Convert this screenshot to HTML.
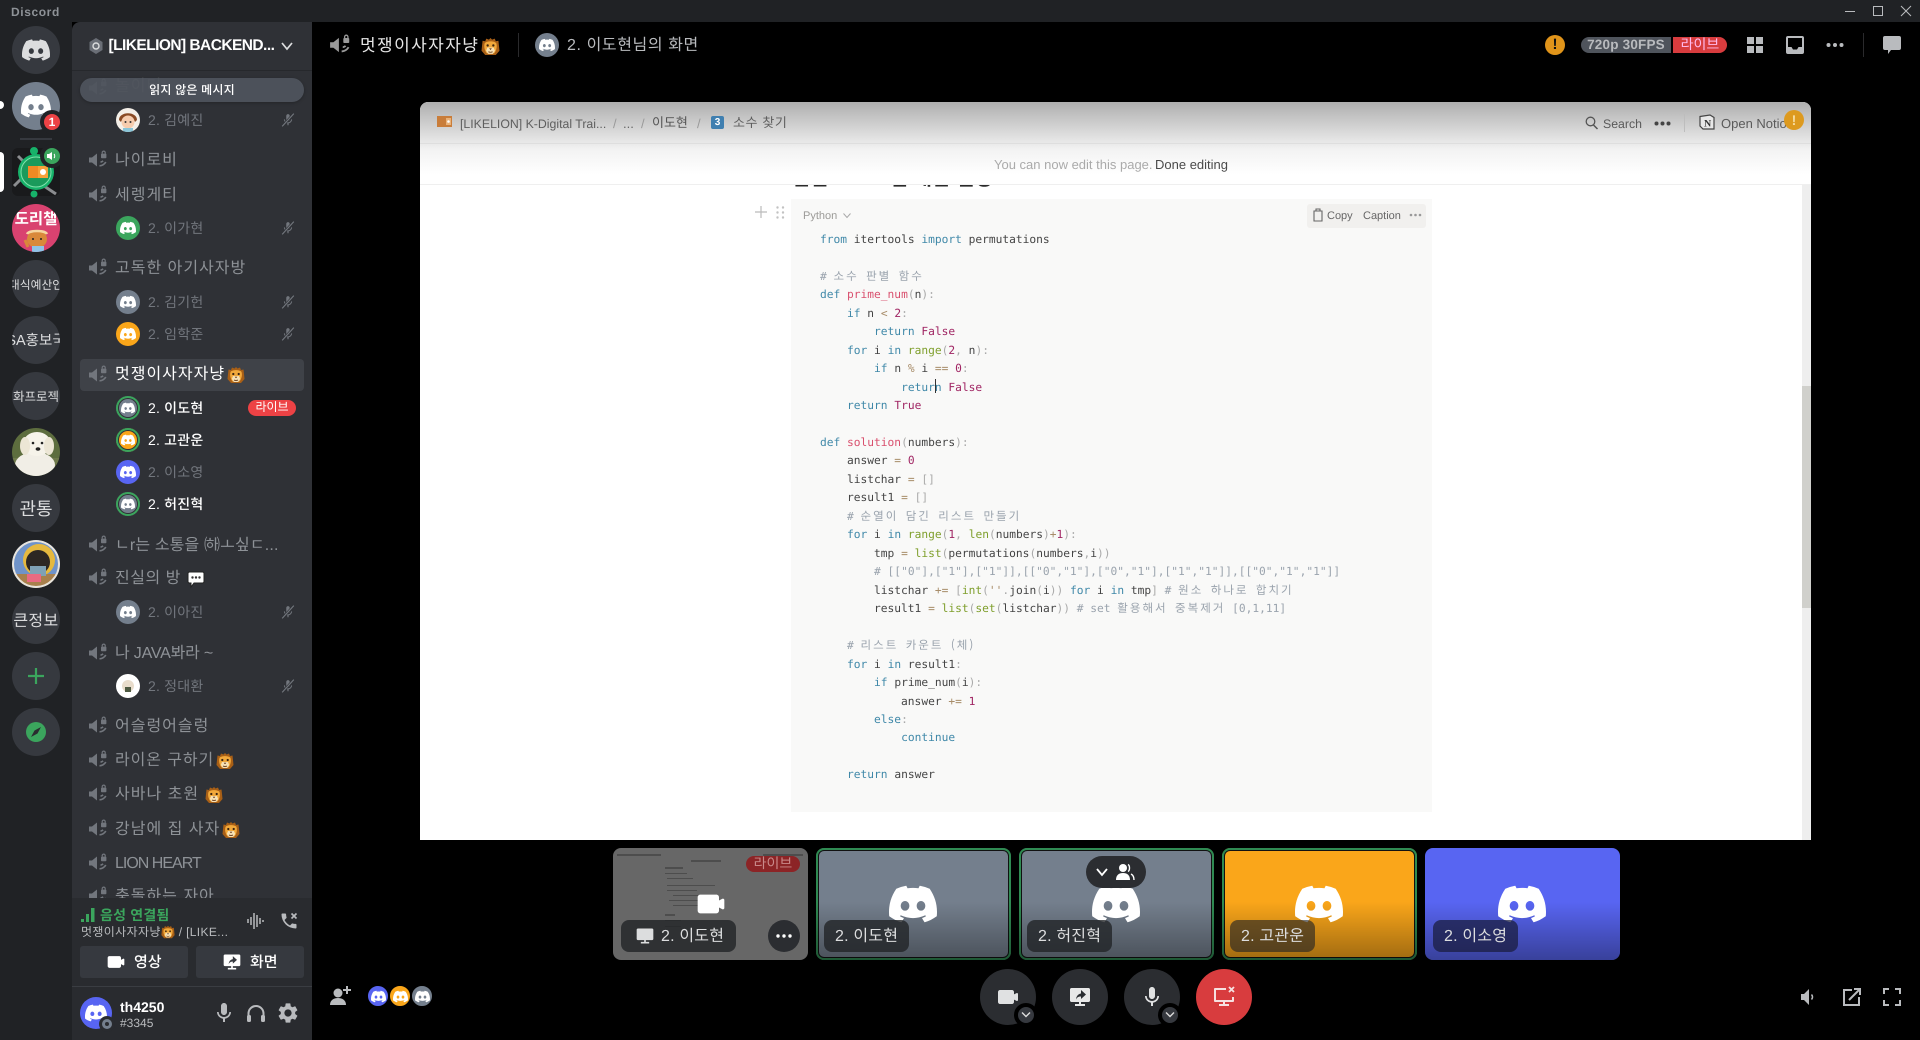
<!DOCTYPE html>
<html lang="ko"><head><meta charset="utf-8"><title>Discord</title>
<style>
*{box-sizing:border-box;margin:0;padding:0}
html,body{width:1920px;height:1040px;overflow:hidden;background:#000}
body{position:relative;font-family:"Liberation Sans","Noto Sans CJK KR",sans-serif;text-rendering:geometricPrecision}
.a{position:absolute;white-space:nowrap}
svg{display:block;overflow:visible}
.ch{position:absolute;left:115px;height:24px;margin-top:1px;line-height:24px;font-size:16px;letter-spacing:1px;color:#8e9297;white-space:nowrap;display:flex;align-items:center;gap:2px}
.vi{position:absolute;left:88px;width:20px;height:20px;color:#72767d}
.nm{position:absolute;left:148px;height:24px;line-height:24px;font-size:14px;letter-spacing:.2px;color:#72767d;white-space:nowrap}
.nm.on{color:#fff;font-weight:500}
.av{position:absolute;width:24px;height:24px;border-radius:50%;display:flex;align-items:center;justify-content:center;color:#fff}
.ring{box-shadow:inset 0 0 0 2px #3ba55d,inset 0 0 0 3px #2f3136}
.mt{position:absolute;left:281px;width:14px;height:16px;color:#72767d}
.sv{position:absolute;left:12px;width:48px;height:48px;border-radius:50%;background:#36393f;overflow:hidden;color:#dcddde;text-align:center;white-space:nowrap;display:flex;align-items:center;justify-content:center}
.tile{position:absolute;top:848px;height:112px;width:195px;border-radius:8px;overflow:hidden}
.tile .g{position:absolute;inset:0;background:linear-gradient(rgba(0,0,0,0) 48%,rgba(0,0,0,.36))}
.sp{box-shadow:inset 0 0 0 2px #2f8a52,inset 0 0 0 3px #111}
.lb{position:absolute;top:72px;height:32px;border-radius:8px;background:rgba(32,34,37,.78);color:#dcddde;font-size:16px;line-height:33px;padding:0 11px;white-space:nowrap;letter-spacing:.2px}
.rb{position:absolute;top:969px;width:56px;height:56px;border-radius:50%;background:#2b2d31;color:#e0e1e2;display:flex;align-items:center;justify-content:center}
.cv{position:absolute;top:1003px;width:24px;height:24px;border-radius:50%;background:#36393f;border:4px solid #000;color:#ddd;display:flex;align-items:center;justify-content:center}
pre.a{white-space:pre;font-family:"DejaVu Sans Mono","Liberation Mono","Noto Sans CJK KR",monospace;font-size:11.23px;line-height:18.47px;color:#444}
pre .k{color:#3f88a8}pre .f{color:#d9506e}pre .n{color:#a02563}pre .b{color:#7f9f2c}pre .p{color:#aaa}pre .o{color:#a88d6a}pre .c{color:#9aa3ad}
pre .h{font-family:"Noto Sans CJK KR",sans-serif;font-size:11.5px;letter-spacing:2px;word-spacing:2.2px;line-height:0}
</style></head><body>
<svg width="0" height="0" style="position:absolute"><defs>
<symbol id="dc" viewBox="0 0 24 24"><path fill="currentColor" d="M20.317 4.3698a19.7913 19.7913 0 00-4.8851-1.5152.0741.0741 0 00-.0785.0371c-.211.3753-.4447.8648-.6083 1.2495-1.8447-.2762-3.68-.2762-5.4868 0-.1636-.3933-.4058-.8742-.6177-1.2495a.077.077 0 00-.0785-.037 19.7363 19.7363 0 00-4.8852 1.515.0699.0699 0 00-.0321.0277C.5334 9.0458-.319 13.5799.0992 18.0578a.0824.0824 0 00.0312.0561c2.0528 1.5076 4.0413 2.4228 5.9929 3.0294a.0777.0777 0 00.0842-.0276c.4616-.6304.8731-1.2952 1.226-1.9942a.076.076 0 00-.0416-.1057c-.6528-.2476-1.2743-.5495-1.8722-.8923a.077.077 0 01-.0076-.1277c.1258-.0943.2517-.1923.3718-.2914a.0743.0743 0 01.0776-.0105c3.9278 1.7933 8.18 1.7933 12.0614 0a.0739.0739 0 01.0785.0095c.1202.099.246.1981.3728.2924a.077.077 0 01-.0066.1276 12.2986 12.2986 0 01-1.873.8914.0766.0766 0 00-.0407.1067c.3604.698.7719 1.3628 1.225 1.9932a.076.076 0 00.0842.0286c1.961-.6067 3.9495-1.5219 6.0023-3.0294a.077.077 0 00.0313-.0552c.5004-5.177-.8382-9.6739-3.5485-13.6604a.061.061 0 00-.0312-.0286zM8.02 15.3312c-1.1825 0-2.1569-1.0857-2.1569-2.419 0-1.3332.9555-2.4189 2.157-2.4189 1.2108 0 2.1757 1.0952 2.1568 2.419 0 1.3332-.9555 2.4189-2.1569 2.4189zm7.9748 0c-1.1825 0-2.1569-1.0857-2.1569-2.419 0-1.3332.9554-2.4189 2.1569-2.4189 1.2108 0 2.1757 1.0952 2.1568 2.419 0 1.3332-.946 2.4189-2.1568 2.4189Z"/></symbol>
<symbol id="vc" viewBox="0 0 20 20"><path fill="currentColor" d="M1 7.5h3L9 3.5v13l-5-4H1z"/><path fill="none" stroke="currentColor" stroke-width="1.7" d="M12.5 12c1 0 1.9-.5 2.6-1.2M11.5 15.8c2.8-.2 5-1.6 6.3-3.8"/><rect fill="currentColor" x="13" y="3.6" width="5.4" height="4.6" rx=".8"/><path fill="none" stroke="currentColor" stroke-width="1.2" d="M14.2 3.8V2.6a1.5 1.5 0 0 1 3 0v1.2"/></symbol>
<symbol id="mute" viewBox="0 0 24 24"><path fill="currentColor" d="M14.99 11c0 1.66-1.33 3-2.99 3-1.66 0-3-1.34-3-3V5c0-1.66 1.34-3 3-3s3 1.34 3 3l-.01 6zM12 16c2.76 0 5.3-2.1 5.3-5H19c0 3.42-2.72 6.23-6 6.72V21h-2v-3.28C7.72 17.23 5 14.42 5 11h1.7c0 2.9 2.54 5 5.3 5z"/><path stroke="#2f3136" stroke-width="4" d="M22 1 2 23"/><path stroke="currentColor" stroke-width="2" d="M22 1 2 23"/></symbol>
<symbol id="mic" viewBox="0 0 24 24"><path fill="currentColor" d="M14.99 11c0 1.66-1.33 3-2.99 3-1.66 0-3-1.34-3-3V5c0-1.66 1.34-3 3-3s3 1.34 3 3l-.01 6zM12 16c2.76 0 5.3-2.1 5.3-5H19c0 3.42-2.72 6.23-6 6.72V21h-2v-3.28C7.72 17.23 5 14.42 5 11h1.7c0 2.9 2.54 5 5.3 5z"/></symbol>
<symbol id="cam" viewBox="0 0 24 24"><path fill="currentColor" d="M21.526 8.149a1 1 0 0 0-.973-.044L18 9.382V7c0-1.103-.897-2-2-2H4C2.897 5 2 5.897 2 7v10c0 1.103.897 2 2 2h12c1.103 0 2-.897 2-2v-2.382l2.553 1.276a.992.992 0 0 0 .973-.043c.294-.183.474-.504.474-.851V9c0-.347-.18-.668-.474-.851z"/></symbol>
<symbol id="scr" viewBox="0 0 24 24"><path fill="currentColor" d="M2 4.5C2 3.67 2.67 3 3.5 3h17c.83 0 1.5.67 1.5 1.5v11c0 .83-.67 1.5-1.5 1.5H13v2h4v2H7v-2h4v-2H3.5C2.67 17 2 16.33 2 15.5z"/></symbol>
<symbol id="lion" viewBox="0 0 18 18"><path fill="#a85f16" d="M1 8 1.5 3.5 4 4 5 1.5 7.5 2.5 9 1l1.500 1.500L13 1.500 14 4l2.500-.5L17 8l.5 5-3.500 4H4L.5 13z"/><path fill="#f2a93b" d="M3.500 6C5 3.500 13 3.500 14.500 6c1 3 0 7-2 9.500h-7C3.500 13 2.500 9 3.500 6z"/><path fill="#f8e2b4" d="M6 10h6l1.200 3-2 3H6.800l-2-3z"/><circle cx="6.300" cy="8" r="1.100" fill="#3a2410"/><circle cx="11.700" cy="8" r="1.100" fill="#3a2410"/><path fill="#5a2d12" d="M7.700 10.800h2.600L9 12.300z"/><path fill="none" stroke="#5a2d12" stroke-width=".8" d="M7 14c1 .6 3 .6 4 0"/></symbol>
</defs></svg>

<!-- title bar -->
<div class="a" style="left:0;top:0;width:1920px;height:22px;background:#202225"></div>
<div class="a" style="left:11px;top:5px;font-size:12px;line-height:14px;font-weight:bold;color:#8e9297;letter-spacing:.6px">Discord</div>
<div class="a" style="left:1845px;top:11px;width:10px;height:1px;background:#b9bbbe"></div>
<div class="a" style="left:1873px;top:6px;width:10px;height:10px;border:1px solid #b9bbbe"></div>
<svg class="a" style="left:1901px;top:6px" width="10" height="10"><path d="M0 0 10 10M10 0 0 10" stroke="#b9bbbe"/></svg>

<!-- server rail -->
<div class="a" style="left:0;top:22px;width:72px;height:1018px;background:#202225"></div>
<div class="a" style="left:72px;top:22px;width:240px;height:1018px;background:#2f3136;border-top-left-radius:8px"></div>
<div class="sv" style="top:26px;color:#dcddde"><svg width="28" height="28"><use href="#dc"/></svg></div>
<div class="sv" style="top:82px;background:#747f8d;color:#fff"><svg width="30" height="30"><use href="#dc"/></svg></div>
<div class="a" style="left:0;top:101px;width:4px;height:8px;border-radius:0 4px 4px 0;background:#fff"></div>
<div class="a" style="left:40px;top:110px;width:24px;height:24px;border-radius:50%;background:#202225"></div>
<div class="a" style="left:44px;top:114px;width:16px;height:16px;border-radius:50%;background:#ed4245;color:#fff;font-size:12px;font-weight:bold;line-height:16px;text-align:center">1</div>
<div class="a" style="left:20px;top:138px;width:32px;height:2px;background:#36393f"></div>
<div class="a" style="left:0;top:152px;width:4px;height:40px;border-radius:0 4px 4px 0;background:#fff"></div>
<svg class="a" style="left:12px;top:148px" width="48" height="48" viewBox="0 0 48 48"><rect width="48" height="48" fill="#191a1c" rx="6"/><path d="M2 38 14 26M34 22l12-8M6 8l8 8M32 38l12 8" stroke="#8b8d90" stroke-width="3"/><circle cx="24" cy="24" r="18" fill="#17b26a"/><circle cx="24" cy="24" r="15" fill="#1a9a5b" stroke="#7fe3ac"/><rect x="16" y="18" width="10" height="12" fill="#f08a24"/><rect x="26" y="18" width="10" height="12" fill="#f6a13a"/><circle cx="31" cy="24" r="3" fill="#fff"/><circle cx="22" cy="3" r="4" fill="#17b26a"/><circle cx="22" cy="46" r="3.500" fill="#17b26a"/></svg>
<div class="a" style="left:40px;top:144px;width:24px;height:24px;border-radius:50%;background:#202225"></div>
<div class="a" style="left:44px;top:148px;width:16px;height:16px;border-radius:50%;background:#3ba55d"></div>
<svg class="a" style="left:47px;top:151px" width="10" height="10" viewBox="0 0 10 10"><path fill="#fff" d="M0 3h2l3-2v8L2 7H0z"/><path fill="none" stroke="#fff" d="M7 3c1 1 1 3 0 4"/></svg>
<div class="sv" style="top:204px;background:#d94270;align-items:flex-start"><svg width="48" height="48" viewBox="0 0 48 48"><ellipse cx="25" cy="35" rx="10" ry="9" fill="#d9893a"/><path d="M15 30c2-4 18-4 20 0" stroke="#f5d6a0" stroke-width="2.500" fill="none"/><circle cx="21" cy="35" r="1" fill="#222"/><circle cx="29" cy="35" r="1" fill="#222"/><rect x="20" y="42" width="12" height="6" fill="#8fc4e8"/><path d="M13 36l3 7" stroke="#d9893a" stroke-width="3"/></svg><div class="a" style="left:0;width:48px;top:7px;line-height:17px;font-size:15.500px;font-weight:bold;color:#fff">도리챌</div></div>
<div class="sv" style="top:260px;font-size:11.800px;line-height:48px;padding-top:1px">대식예산인</div>
<div class="sv" style="top:316px;font-size:14.500px;line-height:48px;padding-top:1px">SA홍보국</div>
<div class="sv" style="top:372px;font-size:12.500px;line-height:48px;padding-top:1px">화프로젝</div>
<svg class="a" style="left:12px;top:428px" width="48" height="48" viewBox="0 0 48 48"><clipPath id="c1"><circle cx="24" cy="24" r="24"/></clipPath><g clip-path="url(#c1)"><rect width="48" height="48" fill="#5d6d3e"/><rect y="30" width="48" height="18" fill="#6f7a4c"/><ellipse cx="23" cy="37" rx="20" ry="13" fill="#f1eee6"/><ellipse cx="25" cy="16" rx="14" ry="12" fill="#f6f3ea"/><ellipse cx="13" cy="18" rx="5" ry="9" fill="#ece6d5"/><ellipse cx="37" cy="18" rx="5" ry="9" fill="#ece6d5"/><circle cx="21" cy="15" r="1.300" fill="#222"/><circle cx="30" cy="15" r="1.300" fill="#222"/><ellipse cx="26" cy="21" rx="2.400" ry="1.800" fill="#222"/></g></svg>
<div class="sv" style="top:484px;font-size:18px;line-height:48px;padding-top:1px">관통</div>
<svg class="a" style="left:12px;top:540px" width="48" height="48" viewBox="0 0 48 48"><clipPath id="c2"><circle cx="24" cy="24" r="24"/></clipPath><g clip-path="url(#c2)"><rect width="48" height="48" fill="#6f93c9"/><rect y="34" width="48" height="14" fill="#a8804c"/><ellipse cx="27" cy="20" rx="16" ry="16" fill="#e5b93f"/><ellipse cx="26" cy="22" rx="12" ry="12" fill="#2c2723"/><rect x="18" y="26" width="16" height="10" fill="#7fa1b5"/><rect x="15" y="34" width="14" height="8" fill="#e86a82"/><circle cx="24" cy="24" r="23" fill="none" stroke="#e8e4dc" stroke-width="2"/></g></svg>
<div class="sv" style="top:596px;font-size:16px;line-height:48px;padding-top:3px;letter-spacing:.4px">큰정보</div>
<div class="sv" style="top:652px;color:#3ba55d"><svg width="24" height="24"><path d="M12 4v16M4 12h16" stroke="#3ba55d" stroke-width="2.200"/></svg></div>
<div class="sv" style="top:708px"><svg width="20" height="20" viewBox="0 0 20 20"><circle cx="10" cy="10" r="10" fill="#3ba55d"/><path fill="#2a2c30" d="M15 5 11.500 11.500 5 15 8.500 8.500z"/></svg></div>

<!-- sidebar header -->
<svg class="a" style="left:88px;top:38px" width="16" height="16" viewBox="0 0 16 16"><path fill="#6a6e76" d="M8 0 14.500 4v8L8 16 1.500 12V4z"/><circle cx="8" cy="8" r="3" fill="none" stroke="#dcddde" stroke-width="1.400"/></svg>
<div class="a" style="left:108.500px;top:34px;line-height:24px;font-size:15.500px;font-weight:bold;color:#fff;letter-spacing:-.55px">[LIKELION] BACKEND...</div>
<svg class="a" style="left:281px;top:40px" width="12" height="12" viewBox="0 0 12 12"><path d="M1 3 6 9l5-6" fill="none" stroke="#dcddde" stroke-width="1.700"/></svg>
<div class="a" style="left:72px;top:70px;width:240px;height:1px;background:#26282c"></div>

<!-- channels -->
<svg class="vi" style="top:78px"><use href="#vc"/></svg><div class="ch" style="top:74px;opacity:.55">놀이터</div>
<div class="a" style="left:80px;top:78px;width:224px;height:24px;border-radius:12px;background:rgba(79,84,92,.93);box-shadow:0 1px 3px rgba(0,0,0,.25);color:#fff;font-size:12px;line-height:24px;text-align:center;font-weight:500;letter-spacing:.2px">읽지 않은 메시지</div>

<svg class="a" style="left:116px;top:108px" width="24" height="24" viewBox="0 0 24 24"><clipPath id="c3"><circle cx="12" cy="12" r="12"/></clipPath><g clip-path="url(#c3)"><rect width="24" height="24" fill="#f4efe8"/><path fill="#8a4a24" d="M3 12C3 3 21 3 21 12l-2 2c-1-5-13-5-14 0z"/><circle cx="12" cy="14" r="6.500" fill="#f6ccae"/><circle cx="9.500" cy="14" r="1" fill="#333"/><circle cx="14.500" cy="14" r="1" fill="#333"/><rect x="7" y="20" width="10" height="4" fill="#8ac5d8"/></g></svg>
<div class="nm" style="top:108px">2. 김예진</div>
<svg class="mt" style="top:112px"><use href="#mute"/></svg>

<svg class="vi" style="top:150px"><use href="#vc"/></svg><div class="ch" style="top:148px">나이로비</div>
<svg class="vi" style="top:185px"><use href="#vc"/></svg><div class="ch" style="top:183px">세렝게티</div>
<div class="av" style="left:116px;top:216px;background:#3ba55d"><svg width="16" height="16"><use href="#dc"/></svg></div>
<div class="nm" style="top:216px">2. 이가현</div><svg class="mt" style="top:220px"><use href="#mute"/></svg>
<svg class="vi" style="top:258px"><use href="#vc"/></svg><div class="ch" style="top:256px">고독한 아기사자방</div>
<div class="av" style="left:116px;top:290px;background:#747f8d"><svg width="16" height="16"><use href="#dc"/></svg></div>
<div class="nm" style="top:290px">2. 김기헌</div><svg class="mt" style="top:294px"><use href="#mute"/></svg>
<div class="av" style="left:116px;top:322px;background:#faa61a"><svg width="16" height="16"><use href="#dc"/></svg></div>
<div class="nm" style="top:322px">2. 임학준</div><svg class="mt" style="top:326px"><use href="#mute"/></svg>

<div class="a" style="left:80px;top:359px;width:224px;height:32px;border-radius:4px;background:#3f4248"></div>
<svg class="vi" style="top:365px"><use href="#vc"/></svg><div class="ch" style="top:362px;color:#fff">멋쟁이사자자냥<svg width="18" height="18"><use href="#lion"/></svg></div>
<div class="av ring" style="left:116px;top:396px;background:#747f8d"><svg width="14" height="14"><use href="#dc"/></svg></div>
<div class="nm on" style="top:396px">2. 이도현</div>
<div class="a" style="left:248px;top:400px;width:48px;height:16px;border-radius:8px;background:#ed4245;color:#fff;font-size:12px;line-height:15px;text-align:center">라이브</div>
<div class="av ring" style="left:116px;top:428px;background:#faa61a"><svg width="14" height="14"><use href="#dc"/></svg></div>
<div class="nm on" style="top:428px">2. 고관운</div>
<div class="av" style="left:116px;top:460px;background:#5865f2"><svg width="16" height="16"><use href="#dc"/></svg></div>
<div class="nm" style="top:460px">2. 이소영</div>
<div class="av ring" style="left:116px;top:492px;background:#747f8d"><svg width="14" height="14"><use href="#dc"/></svg></div>
<div class="nm on" style="top:492px">2. 허진혁</div>

<svg class="vi" style="top:535px"><use href="#vc"/></svg><div class="ch" style="top:533px;letter-spacing:.15px">ㄴr는 소통을 ㈛ㅗ싶ㄷ...</div>
<svg class="vi" style="top:568px"><use href="#vc"/></svg><div class="ch" style="top:566px;letter-spacing:.5px">진실의 방 <svg style="margin-left:4px" width="18" height="17" viewBox="0 0 18 17"><path fill="#fff" stroke="#222" d="M2.500 1h13A1.500 1.500 0 0 1 17 2.500v8a1.500 1.500 0 0 1-1.500 1.500H7l-3 4v-4H2.500A1.500 1.500 0 0 1 1 10.500v-8A1.500 1.500 0 0 1 2.500 1z"/><circle cx="5.500" cy="6.500" r="1.200" fill="#333"/><circle cx="9" cy="6.500" r="1.200" fill="#333"/><circle cx="12.500" cy="6.500" r="1.200" fill="#333"/></svg></div>
<div class="av" style="left:116px;top:600px;background:#747f8d"><svg width="16" height="16"><use href="#dc"/></svg></div>
<div class="nm" style="top:600px">2. 이아진</div><svg class="mt" style="top:604px"><use href="#mute"/></svg>
<svg class="vi" style="top:643px"><use href="#vc"/></svg><div class="ch" style="top:641px;letter-spacing:-.2px">나 JAVA봐라 ~</div>
<svg class="a" style="left:116px;top:674px" width="24" height="24" viewBox="0 0 24 24"><circle cx="12" cy="12" r="12" fill="#fff"/><circle cx="12" cy="12" r="6" fill="#e8dccb"/><rect x="9" y="13" width="6" height="5" fill="#4e5a42"/></svg>
<div class="nm" style="top:674px">2. 정대환</div><svg class="mt" style="top:678px"><use href="#mute"/></svg>

<svg class="vi" style="top:716px"><use href="#vc"/></svg><div class="ch" style="top:714px">어슬렁어슬렁</div>
<svg class="vi" style="top:750px"><use href="#vc"/></svg><div class="ch" style="top:748px;letter-spacing:.9px">라이온 구하기<svg width="18" height="18"><use href="#lion"/></svg></div>
<svg class="vi" style="top:784px"><use href="#vc"/></svg><div class="ch" style="top:782px">사바나 초원 <svg style="margin-left:4px" width="18" height="18"><use href="#lion"/></svg></div>
<svg class="vi" style="top:819px"><use href="#vc"/></svg><div class="ch" style="top:817px">강남에 집 사자<svg width="18" height="18"><use href="#lion"/></svg></div>
<svg class="vi" style="top:853px"><use href="#vc"/></svg><div class="ch" style="top:851px;letter-spacing:-1px">LION HEART</div>
<svg class="vi" style="top:886px"><use href="#vc"/></svg><div class="ch" style="top:884px">충돌하는 자아</div>

<!-- voice panel -->
<div class="a" style="left:72px;top:898px;width:240px;height:142px;background:#292b2f"></div>
<div class="a" style="left:72px;top:986px;width:240px;height:1px;background:#3a3d42"></div>
<svg class="a" style="left:81px;top:908px" width="14" height="14" viewBox="0 0 14 14"><path fill="#3ba55d" d="M0 11h3v3H0zM5 6h3v8H5zM10 0h3.500v14H10z"/></svg>
<div class="a" style="left:100px;top:905px;font-size:14px;line-height:20px;font-weight:bold;color:#3ba55d;letter-spacing:.2px">음성 연결됨</div>
<div class="a" style="left:81px;top:923px;font-size:12px;line-height:18px;color:#b9bbbe;letter-spacing:.35px;display:flex;align-items:center">멋쟁이사자자냥<svg width="14" height="14"><use href="#lion"/></svg><span style="margin-left:4px">/ [LIKE...</span></div>
<svg class="a" style="left:247px;top:912px" width="18" height="18" viewBox="0 0 18 18"><path d="M1 7v4M4 5v8M7 1v16M10 3v12M13 6v6M16 8v2" stroke="#b9bbbe" stroke-width="1.500"/></svg>
<svg class="a" style="left:279px;top:911px" width="20" height="20" viewBox="0 0 24 24"><path fill="#b9bbbe" d="M20 15.500c-1.250 0-2.450-.2-3.570-.57a1 1 0 0 0-1.020.24l-2.200 2.200a15 15 0 0 1-6.590-6.590l2.200-2.200a1 1 0 0 0 .25-1A11.400 11.400 0 0 1 8.500 4a1 1 0 0 0-1-1H4a1 1 0 0 0-1 1 17 17 0 0 0 17 17 1 1 0 0 0 1-1v-3.500a1 1 0 0 0-1-1z"/><path d="M15 3l6 6M21 3l-6 6" stroke="#b9bbbe" stroke-width="2"/></svg>
<div class="a" style="left:80px;top:946px;width:108px;height:32px;background:#36393f;border-radius:3px"></div>
<div class="a" style="left:196px;top:946px;width:108px;height:32px;background:#36393f;border-radius:3px"></div>
<svg class="a" style="left:106px;top:952px;color:#fff" width="20" height="20"><use href="#cam"/></svg>
<div class="a" style="left:134px;top:951px;font-size:15px;line-height:24px;color:#fff;font-weight:500">영상</div>
<svg class="a" style="left:222px;top:952px;color:#fff" width="20" height="20"><use href="#scr"/></svg>
<svg class="a" style="left:222px;top:952px" width="20" height="20" viewBox="0 0 24 24"><path fill="#36393f" d="M13 5l5 4.500-5 4.500v-2.500c-2.500 0-4 .8-5 3 .3-3.200 2-5.500 5-6z"/></svg>
<div class="a" style="left:250px;top:951px;font-size:15px;line-height:24px;color:#fff;font-weight:500">화면</div>
<div class="av" style="left:80px;top:997px;width:32px;height:32px;background:#5865f2"><svg width="22" height="22"><use href="#dc"/></svg></div>
<div class="a" style="left:99px;top:1016px;width:16px;height:16px;border-radius:50%;background:#292b2f"></div>
<div class="a" style="left:102px;top:1019px;width:10px;height:10px;border-radius:50%;background:#747f8d"></div>
<div class="a" style="left:105px;top:1022px;width:4px;height:4px;border-radius:50%;background:#292b2f"></div>
<div class="a" style="left:120px;top:997px;font-size:14px;line-height:20px;font-weight:bold;color:#fff">th4250</div>
<div class="a" style="left:120px;top:1015px;font-size:12px;line-height:16px;color:#b9bbbe">#3345</div>
<svg class="a" style="left:212px;top:1001px;color:#b9bbbe" width="24" height="24"><use href="#mic"/></svg>
<svg class="a" style="left:244px;top:1001px" width="24" height="24" viewBox="0 0 24 24"><path d="M4.500 18v-5.500a7.500 7.500 0 0 1 15 0V18" fill="none" stroke="#b9bbbe" stroke-width="2"/><rect x="3" y="14" width="4" height="7" rx="1.500" fill="#b9bbbe"/><rect x="17" y="14" width="4" height="7" rx="1.500" fill="#b9bbbe"/></svg>
<svg class="a" style="left:276px;top:1001px" width="24" height="24" viewBox="0 0 24 24"><path fill="#b9bbbe" d="M19.140 12.940c.04-.3.06-.61.06-.94 0-.32-.02-.64-.07-.94l2.030-1.580c.18-.14.23-.41.12-.61l-1.920-3.320c-.12-.22-.37-.29-.59-.22l-2.390.96c-.5-.38-1.030-.7-1.620-.94l-.36-2.540c-.04-.24-.24-.41-.48-.41h-3.840c-.24 0-.43.17-.47.41l-.36 2.540c-.59.24-1.130.57-1.620.94l-2.390-.96c-.22-.08-.47 0-.59.22L2.740 8.870c-.12.21-.08.47.12.61l2.030 1.580c-.05.3-.09.63-.09.94s.02.64.07.94l-2.030 1.580c-.18.14-.23.41-.12.61l1.920 3.320c.12.22.37.29.59.22l2.390-.96c.5.38 1.030.7 1.620.94l.36 2.540c.05.24.24.41.48.41h3.840c.24 0 .44-.17.47-.41l.36-2.540c.59-.24 1.130-.56 1.620-.94l2.390.96c.22.08.47 0 .59-.22l1.920-3.320c.12-.22.07-.47-.12-.61l-2.010-1.580zM12 15.600c-1.980 0-3.600-1.620-3.600-3.600s1.620-3.600 3.600-3.600 3.600 1.620 3.600 3.600-1.620 3.600-3.600 3.600z"/></svg>

<!-- main header -->
<svg class="a" style="left:329px;top:34px;color:#999" width="22" height="22"><use href="#vc"/></svg>
<div class="a" style="left:360px;top:34px;height:24px;line-height:24px;font-size:17px;letter-spacing:1.4px;color:#e6e6e6;display:flex;align-items:center;gap:2px">멋쟁이사자자냥<svg width="19" height="19"><use href="#lion"/></svg></div>
<div class="a" style="left:518px;top:33px;width:1px;height:24px;background:#2a2a2c"></div>
<div class="av" style="left:535px;top:33px;background:#747f8d"><svg width="16" height="16"><use href="#dc"/></svg></div>
<div class="a" style="left:567px;top:34px;line-height:24px;font-size:16px;letter-spacing:.6px;color:#b9bbbe">2. 이도현님의 화면</div>
<div class="a" style="left:1545px;top:35px;width:20px;height:20px;border-radius:50%;background:#e0941a;color:#111;font-size:15px;font-weight:bold;line-height:20px;text-align:center">!</div>
<div class="a" style="left:1581px;top:37px;width:90px;height:16px;background:#4f545c;border-radius:8px 0 0 8px;color:#b9bbbe;font-size:13.500px;font-weight:bold;line-height:16px;text-align:center;letter-spacing:.2px">720p 30FPS</div>
<div class="a" style="left:1673px;top:37px;width:54px;height:16px;background:#d83c3e;border-radius:0 8px 8px 0;color:#fbe;font-size:14px;line-height:15px;text-align:center">라이브</div>
<svg class="a" style="left:1747px;top:37px" width="16" height="16"><path fill="#b9bbbe" d="M0 0h7v7H0zM9 0h7v7H9zM0 9h7v7H0zM9 9h7v7H9z"/></svg>
<svg class="a" style="left:1786px;top:36px" width="18" height="18" viewBox="0 0 18 18"><path fill="#b9bbbe" d="M2 0h14a2 2 0 0 1 2 2v14a2 2 0 0 1-2 2H2a2 2 0 0 1-2-2V2a2 2 0 0 1 2-2zm0 2v9h3.500l1.500 2.500h4L12.500 11H16V2z"/></svg>
<svg class="a" style="left:1826px;top:42px" width="18" height="6"><circle cx="2.500" cy="3" r="2" fill="#b9bbbe"/><circle cx="9" cy="3" r="2" fill="#b9bbbe"/><circle cx="15.500" cy="3" r="2" fill="#b9bbbe"/></svg>
<div class="a" style="left:1863px;top:33px;width:1px;height:24px;background:#2a2a2c"></div>
<svg class="a" style="left:1883px;top:36px" width="18" height="18" viewBox="0 0 18 18"><path fill="#b9bbbe" d="M2 0h14a2 2 0 0 1 2 2v10a2 2 0 0 1-2 2H8l-3 4v-4H2a2 2 0 0 1-2-2V2a2 2 0 0 1 2-2z"/></svg>

<!-- shared screen -->
<div class="a" style="left:420px;top:102px;width:1391px;height:738px;background:#fff;border-radius:8px 8px 0 0;overflow:hidden;filter:blur(.25px)">
  <div class="a" style="left:372px;top:62px;font-size:20px;line-height:30px;font-weight:bold;color:#2a2a2a">간단 프로그램 대한 설명</div>
  <div class="a" style="left:0;top:0;width:1391px;height:82px;background:linear-gradient(#afafaf 0,#d4d4d4 26px,#f3f3f3 48px,#fff 72px);"></div>
  <div class="a" style="left:0;top:41px;width:1391px;height:1px;background:rgba(0,0,0,.05)"></div>
  <div class="a" style="left:0;top:82px;width:1391px;height:1px;background:#efefef"></div>
  <svg class="a" style="left:17px;top:13px" width="15" height="14" viewBox="0 0 15 14"><rect y="1" width="15" height="11" fill="#c97d3a"/><rect x="9" y="3" width="5" height="7" fill="#eab278"/><circle cx="11.500" cy="6.500" r="1.300" fill="#fff"/></svg>
  <div class="a" style="left:40px;top:13px;font-size:12.300px;line-height:18px;color:#5e5e5e">[LIKELION] K-Digital Trai...</div>
  <div class="a" style="left:193px;top:13px;font-size:13px;line-height:18px;color:#999">/</div>
  <div class="a" style="left:203px;top:13px;font-size:13px;line-height:18px;color:#666">...</div>
  <div class="a" style="left:221px;top:13px;font-size:13px;line-height:18px;color:#999">/</div>
  <div class="a" style="left:232px;top:12px;font-size:13px;line-height:18px;color:#555">이도현</div>
  <div class="a" style="left:277px;top:13px;font-size:13px;line-height:18px;color:#999">/</div>
  <div class="a" style="left:291px;top:14px;width:13px;height:13px;background:#3f7fb0;border-radius:2px;color:#fff;font-size:10px;font-weight:bold;line-height:13px;text-align:center">3</div>
  <div class="a" style="left:313px;top:12px;font-size:13px;line-height:18px;letter-spacing:.6px;color:#5e5e5e">소수 찾기</div>
  <svg class="a" style="left:1165px;top:14px" width="13" height="14" viewBox="0 0 13 14"><circle cx="5.500" cy="5.500" r="4.300" fill="none" stroke="#555" stroke-width="1.300"/><path d="M8.500 9l4 4" stroke="#555" stroke-width="1.500"/></svg>
  <div class="a" style="left:1183px;top:13px;font-size:12.300px;line-height:18px;color:#5a5a5a">Search</div>
  <svg class="a" style="left:1234px;top:19px" width="17" height="5"><circle cx="2.500" cy="2.500" r="2" fill="#444"/><circle cx="8.500" cy="2.500" r="2" fill="#444"/><circle cx="14.500" cy="2.500" r="2" fill="#444"/></svg>
  <div class="a" style="left:1264px;top:12px;width:1px;height:18px;background:#bdbdbd"></div>
  <svg class="a" style="left:1279px;top:12px" width="16" height="16" viewBox="0 0 16 16"><path fill="#e8e8e8" stroke="#444" stroke-width="1.200" d="M1 2.500 11 1l4 2.500V15H4L1 12z"/><text x="5" y="12.500" font-family="Liberation Serif,serif" font-weight="bold" font-size="10" fill="#333">N</text></svg>
  <div class="a" style="left:1301px;top:13px;font-size:13px;line-height:18px;color:#5a5a5a">Open Notion</div>
  <div class="a" style="left:1364px;top:8px;width:20px;height:20px;border-radius:50%;background:#dd9a1f;color:#f6dca0;font-size:14px;font-weight:bold;line-height:20px;text-align:center">!</div>
  <div class="a" style="left:574px;top:54px;font-size:13px;line-height:18px;color:#aaa">You can now edit this page.</div>
  <div class="a" style="left:735px;top:54px;font-size:13px;line-height:18px;color:#4a4a4a">Done editing</div>

  <div class="a" style="left:1382px;top:83px;width:9px;height:655px;background:#eee"></div>
  <div class="a" style="left:1382px;top:284px;width:9px;height:222px;background:#d0d0cc"></div>

  <svg class="a" style="left:335px;top:104px" width="12" height="12"><path d="M6 0v12M0 6h12" stroke="#bbb" stroke-width="1.200"/></svg>
  <svg class="a" style="left:356px;top:104px" width="9" height="13"><g fill="#c2c2c2"><circle cx="1.500" cy="1.500" r="1.200"/><circle cx="7" cy="1.500" r="1.200"/><circle cx="1.500" cy="6.500" r="1.200"/><circle cx="7" cy="6.500" r="1.200"/><circle cx="1.500" cy="11.500" r="1.200"/><circle cx="7" cy="11.500" r="1.200"/></g></svg>

  <div class="a" style="left:371px;top:97px;width:641px;height:613px;background:#f9f9f8"></div>
  <div class="a" style="left:383px;top:105px;font-size:11px;line-height:18px;color:#9b9a97">Python</div>
  <svg class="a" style="left:423px;top:111px" width="8" height="6"><path d="M.5.500 4 4.500 7.500.500" fill="none" stroke="#aaa"/></svg>
  <div class="a" style="left:887px;top:102px;width:119px;height:24px;background:#f1f0ee;border-radius:3px"></div>
  <svg class="a" style="left:893px;top:106px" width="10" height="14" viewBox="0 0 10 14"><path fill="none" stroke="#666" stroke-width="1.100" d="M1 3h8v10H1zM3 3V1h4v2"/></svg>
  <div class="a" style="left:907px;top:105px;font-size:11px;line-height:18px;color:#666">Copy</div>
  <div class="a" style="left:943px;top:105px;font-size:11px;line-height:18px;color:#666">Caption</div>
  <svg class="a" style="left:989px;top:111px" width="13" height="4"><circle cx="2" cy="2" r="1.300" fill="#999"/><circle cx="6.500" cy="2" r="1.300" fill="#999"/><circle cx="11" cy="2" r="1.300" fill="#999"/></svg>

  <pre class="a" style="left:400px;top:128.800px"><span class="k">from</span> itertools <span class="k">import</span> permutations

<span class="c"># <span class="h">소수 판별 함수</span></span>
<span class="k">def</span> <span class="f">prime_num</span><span class="p">(</span>n<span class="p">):</span>
    <span class="k">if</span> n <span class="o">&lt;</span> <span class="n">2</span><span class="p">:</span>
        <span class="k">return</span> <span class="n">False</span>
    <span class="k">for</span> i <span class="k">in</span> <span class="b">range</span><span class="p">(</span><span class="n">2</span><span class="p">,</span> n<span class="p">):</span>
        <span class="k">if</span> n <span class="o">%</span> i <span class="o">==</span> <span class="n">0</span><span class="p">:</span>
            <span class="k">return</span> <span class="n">False</span>
    <span class="k">return</span> <span class="n">True</span>

<span class="k">def</span> <span class="f">solution</span><span class="p">(</span>numbers<span class="p">):</span>
    answer <span class="o">=</span> <span class="n">0</span>
    listchar <span class="o">=</span> <span class="p">[]</span>
    result1 <span class="o">=</span> <span class="p">[]</span>
    <span class="c"># <span class="h">순열이 담긴 리스트 만들기</span></span>
    <span class="k">for</span> i <span class="k">in</span> <span class="b">range</span><span class="p">(</span><span class="n">1</span><span class="p">,</span> <span class="b">len</span><span class="p">(</span>numbers<span class="p">)</span><span class="o">+</span><span class="n">1</span><span class="p">):</span>
        tmp <span class="o">=</span> <span class="b">list</span><span class="p">(</span>permutations<span class="p">(</span>numbers<span class="p">,</span>i<span class="p">))</span>
        <span class="c"># [["0"],["1"],["1"]],[["0","1"],["0","1"],["1","1"]],[["0","1","1"]]</span>
        listchar <span class="o">+=</span> <span class="p">[</span><span class="b">int</span><span class="p">(</span><span class="o">''</span><span class="p">.</span>join<span class="p">(</span>i<span class="p">))</span> <span class="k">for</span> i <span class="k">in</span> tmp<span class="p">]</span> <span class="c"># <span class="h">원소 하나로 합치기</span></span>
        result1 <span class="o">=</span> <span class="b">list</span><span class="p">(</span><span class="b">set</span><span class="p">(</span>listchar<span class="p">))</span> <span class="c"># set <span class="h">활용해서 중복제거</span> [0,1,11]</span>

    <span class="c"># <span class="h">리스트 카운트 (체)</span></span>
    <span class="k">for</span> i <span class="k">in</span> result1<span class="p">:</span>
        <span class="k">if</span> prime_num<span class="p">(</span>i<span class="p">):</span>
            answer <span class="o">+=</span> <span class="n">1</span>
        <span class="k">else</span><span class="p">:</span>
            <span class="k">continue</span>

    <span class="k">return</span> answer</pre>
  <div class="a" style="left:514.500px;top:277px;width:1px;height:14px;background:#333"></div>
</div>

<!-- tiles -->
<div class="tile" style="left:613px;background:#676767">
  <svg class="a" style="left:0;top:0" width="195" height="112"><g fill="#4d4d4d"><rect x="4" y="6" width="44" height="2"/><rect x="150" y="6" width="40" height="2"/><rect x="78" y="12" width="30" height="2" /><rect x="52" y="19" width="18" height="2"/><rect x="52" y="25" width="22" height="1"/><rect x="54" y="30" width="26" height="1"/><rect x="54" y="37" width="48" height="1"/><rect x="54" y="42" width="30" height="1"/><rect x="60" y="47" width="38" height="1"/><rect x="56" y="52" width="30" height="1"/><rect x="60" y="57" width="34" height="1"/><rect x="52" y="66" width="10" height="2"/><rect x="52" y="72" width="16" height="1"/><rect x="52" y="78" width="16" height="1"/></g></svg>
  <div class="a" style="left:133px;top:8px;width:54px;height:16px;border-radius:8px;background:#8c2426;color:#c98a8a;font-size:14px;line-height:15px;text-align:center">라이브</div>
  <svg class="a" style="left:82px;top:40px;color:#fff" width="32" height="32"><use href="#cam"/></svg>
  <div class="lb" style="left:8px;width:115px;padding-left:14px;display:flex;align-items:center;gap:6px"><svg width="20" height="20" style="color:#dcddde"><use href="#scr"/></svg><span>2. 이도현</span></div>
  <div class="a" style="left:155px;top:72px;width:32px;height:32px;border-radius:50%;background:#2b2d31"></div>
  <svg class="a" style="left:162px;top:86px" width="18" height="4"><circle cx="3" cy="2" r="1.700" fill="#fff"/><circle cx="9" cy="2" r="1.700" fill="#fff"/><circle cx="15" cy="2" r="1.700" fill="#fff"/></svg>
</div>
<div class="tile sp" style="left:816px;background:#747f8d"><div class="g"></div><svg class="a" style="left:73px;top:32px;color:#fff" width="48" height="48"><use href="#dc"/></svg><div class="lb" style="left:8px">2. 이도현</div></div>
<div class="tile sp" style="left:1019px;background:#747f8d"><div class="g"></div><svg class="a" style="left:73px;top:32px;color:#fff" width="48" height="48"><use href="#dc"/></svg><div class="lb" style="left:8px">2. 허진혁</div>
  <div class="a" style="left:67px;top:8px;width:60px;height:32px;border-radius:16px;background:#2b2d31"></div>
  <svg class="a" style="left:77px;top:20px" width="12" height="9"><path d="M1 1l5 6 5-6" fill="none" stroke="#fff" stroke-width="1.800"/></svg>
  <svg class="a" style="left:96px;top:15px" width="20" height="18" viewBox="0 0 20 18"><circle cx="8" cy="5" r="4" fill="#fff"/><path fill="#fff" d="M1 17c0-5 3-7 7-7s7 2 7 7z"/><path fill="none" stroke="#fff" stroke-width="1.400" d="M13 1.500c2 1 2 6 0 7M16 11c2 1 3 3 3 6"/></svg>
</div>
<div class="tile sp" style="left:1222px;background:#faa61a"><div class="g"></div><svg class="a" style="left:73px;top:32px;color:#fff" width="48" height="48"><use href="#dc"/></svg><div class="lb" style="left:8px;background:rgba(32,34,37,.62)">2. 고관운</div></div>
<div class="tile" style="left:1425px;background:#5865f2"><div class="g"></div><svg class="a" style="left:73px;top:32px;color:#fff" width="48" height="48"><use href="#dc"/></svg><div class="lb" style="left:8px;background:rgba(25,28,60,.72)">2. 이소영</div></div>

<!-- bottom bar -->
<svg class="a" style="left:328px;top:984px;color:#b9bbbe" width="24" height="24" viewBox="0 0 24 24"><circle cx="10" cy="9" r="4.500" fill="currentColor"/><path fill="currentColor" d="M2 21c0-5 4-7 8-7s8 2 8 7z"/><path d="M19 2v8M15 6h8" stroke="currentColor" stroke-width="2"/></svg>
<div class="av" style="left:366px;top:984px;background:#5865f2;border:2px solid #000"><svg width="15" height="15"><use href="#dc"/></svg></div>
<div class="av" style="left:388px;top:984px;background:#faa61a;border:2px solid #000"><svg width="15" height="15"><use href="#dc"/></svg></div>
<div class="av" style="left:410px;top:984px;background:#747f8d;border:2px solid #000"><svg width="15" height="15"><use href="#dc"/></svg></div>

<div class="rb" style="left:980px"><svg width="24" height="24"><use href="#cam"/></svg></div>
<div class="rb" style="left:1052px;color:#e8e8e8"><svg width="24" height="24"><use href="#scr"/></svg><svg class="a" style="left:16px;top:16px" width="24" height="24" viewBox="0 0 24 24"><path fill="#2b2d31" d="M13 5l5 4.500-5 4.500v-2.500c-2.500 0-4 .8-5 3 .3-3.200 2-5.500 5-6z"/></svg></div>
<div class="rb" style="left:1124px"><svg width="24" height="24"><use href="#mic"/></svg></div>
<div class="rb" style="left:1196px;background:#d83c3e;color:#f6e0e0"><svg width="24" height="24" viewBox="0 0 24 24"><path fill="currentColor" d="M3 3h11v2H4v10h16v-3h2v4c0 .6-.4 1-1 1h-8v2h4v2H7v-2h4v-2H3a1 1 0 0 1-1-1V4c0-.6.4-1 1-1z"/><path d="M17 2l5 5M22 2l-5 5" stroke="currentColor" stroke-width="1.800"/></svg></div>
<div class="cv" style="left:1014px"><svg width="10" height="8"><path d="M1 1.500l4 4 4-4" fill="none" stroke="#ddd" stroke-width="1.400"/></svg></div>
<div class="cv" style="left:1158px"><svg width="10" height="8"><path d="M1 1.500l4 4 4-4" fill="none" stroke="#ddd" stroke-width="1.400"/></svg></div>

<svg class="a" style="left:1799px;top:986px" width="20" height="22" viewBox="0 0 20 22"><path fill="#b9bbbe" d="M2 8h3l5-5v16l-5-5H2z"/><path fill="none" stroke="#b9bbbe" stroke-width="1.500" d="M12.500 8.500c1.200 1.500 1.200 3.500 0 5"/></svg>
<svg class="a" style="left:1842px;top:987px" width="20" height="20" viewBox="0 0 20 20"><path fill="none" stroke="#b9bbbe" stroke-width="2" d="M10 3H2v15h15v-8M7 13 18 2M12 2h6v6"/></svg>
<svg class="a" style="left:1882px;top:987px" width="20" height="20" viewBox="0 0 20 20"><path fill="none" stroke="#b9bbbe" stroke-width="2" d="M7 2H2v5M13 2h5v5M7 18H2v-5M13 18h5v-5"/></svg>
</body></html>
